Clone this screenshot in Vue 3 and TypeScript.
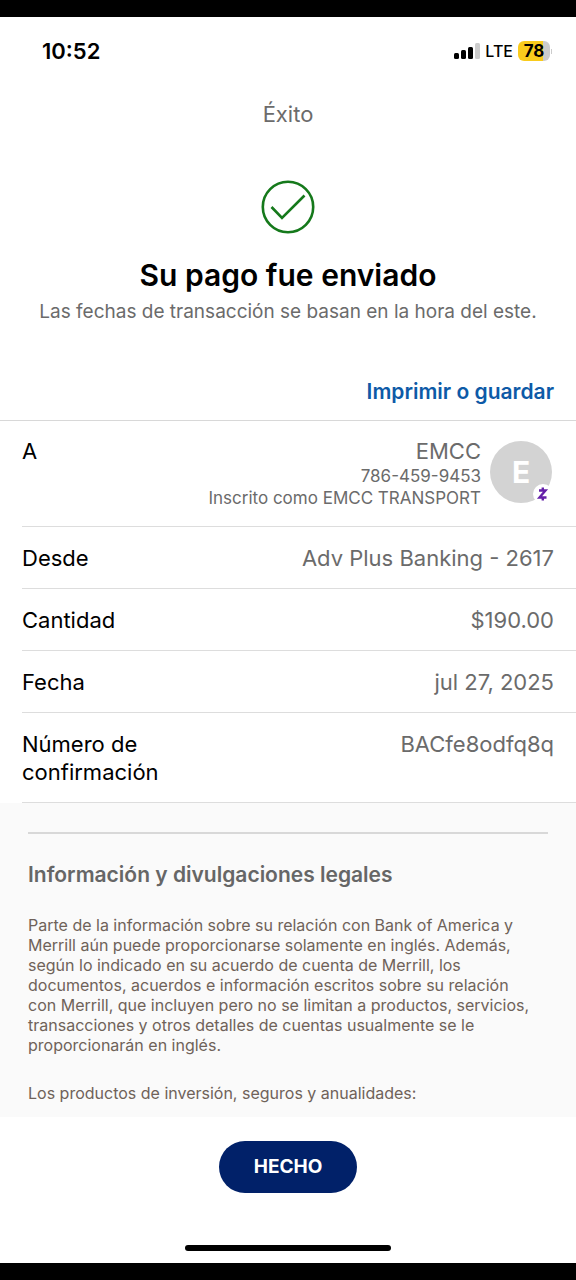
<script setup lang="ts">
interface Detail {
  label: string
  value: string
}

const details: Detail[] = [
  { label: 'Desde', value: 'Adv Plus Banking - 2617' },
  { label: 'Cantidad', value: '$190.00' },
  { label: 'Fecha', value: 'jul 27, 2025' },
  { label: 'Número de confirmación', value: 'BACfe8odfq8q' },
]
</script>

<template>
  <div class="screen">
    <header class="status">
      <span class="time">10:52</span>
      <div class="indicators">
        <svg class="signal" viewBox="0 0 26 16" aria-hidden="true">
          <rect x="0" y="10" width="5" height="6" rx="1.5" />
          <rect x="7" y="7" width="5" height="9" rx="1.5" />
          <rect x="14" y="4" width="5" height="12" rx="1.5" />
          <rect class="dim" x="21" y="0" width="5" height="16" rx="1.5" />
        </svg>
        <span class="network">LTE</span>
        <span class="power">
          <span class="battery">78</span>
          <span class="nub"></span>
        </span>
      </div>
    </header>
    <main>
      <p class="title">Éxito</p>
      <section class="hero">
        <svg class="check" viewBox="0 0 54 54" aria-hidden="true">
          <circle cx="27" cy="27" r="25.2" />
          <path d="M10.500 27 L21 38 L43.500 15.500" />
        </svg>
        <h1>Su pago fue enviado</h1>
        <p>Las fechas de transacción se basan en la hora del este.</p>
      </section>
      <div class="actions"><a href="#">Imprimir o guardar</a></div>
      <dl class="details">
        <div class="row recipient">
          <dt>A</dt>
          <dd>
            <div class="who">
              <span class="name">EMCC</span>
              <span>786-459-9453</span>
              <span>Inscrito como EMCC TRANSPORT</span>
            </div>
            <div class="avatar">
              E
              <svg class="zelle" viewBox="0 0 20 20" aria-hidden="true">
                <circle cx="10" cy="10" r="10" />
                <path d="M6 6.500 H12.500 L6.500 13.500 H13.500 M9.800 3.500 V6.500 M9.800 13.500 V16.500" />
              </svg>
            </div>
          </dd>
        </div>
        <div v-for="d in details" :key="d.label" class="row">
          <dt>{{ d.label }}</dt>
          <dd>{{ d.value }}</dd>
        </div>
      </dl>
      <section class="legal">
        <h2>Información y divulgaciones legales</h2>
        <p>
          Parte de la información sobre su relación con Bank of America y Merrill aún puede
          proporcionarse solamente en inglés. Además, según lo indicado en su acuerdo de cuenta de
          Merrill, los documentos, acuerdos e información escritos sobre su relación con Merrill,
          que incluyen pero no se limitan a productos, servicios, transacciones y otros detalles de
          cuentas usualmente se le proporcionarán en inglés.
        </p>
        <p>Los productos de inversión, seguros y anualidades:</p>
      </section>
    </main>
    <footer>
      <button type="button">HECHO</button>
      <div class="home"></div>
    </footer>
  </div>
</template>

<style>
body {
  margin: 0;
  background: #fff;
}
</style>

<style scoped>
.screen {
  border-top: 17px solid #000;
  border-bottom: 17px solid #000;
  background: #fff;
  color: #000;
  font-family: Inter, "Liberation Sans", sans-serif;
}
p, h1, h2, dl, dd { margin: 0; }
.status {
  display: flex;
  justify-content: space-between;
  align-items: center;
  height: 68px;
  padding: 0 24px 0 42px;
}
.time { font-size: 22px; font-weight: 600; }
.indicators { display: flex; align-items: center; gap: 5px; }
.signal { width: 26px; height: 16px; fill: #000; }
.signal .dim { fill: #ccc; }
.network { font-size: 16px; font-weight: 500; }
.power { display: flex; align-items: center; gap: 1px; }
.battery {
  width: 32px;
  border-radius: 6px;
  background: linear-gradient(90deg, #f9cb1c 78%, #ccc 78%);
  font-size: 17px;
  font-weight: 700;
  line-height: 20px;
  text-align: center;
}
.nub { width: 1px; height: 5px; background: #ccc; }
.title {
  padding-top: 14px;
  color: #6b6b6b;
  font-size: 22px;
  line-height: 30px;
  text-align: center;
}
.hero { padding-top: 51px; text-align: center; }
.check {
  display: block;
  width: 54px;
  height: 54px;
  margin: 0 auto;
  fill: none;
  stroke: #15791b;
  stroke-width: 2.6;
}
h1 { padding-top: 22px; font-size: 30px; font-weight: 600; line-height: 38px; }
.hero p { padding-top: 6px; color: #6b6b6b; font-size: 19px; line-height: 24px; }
.actions { padding: 54px 22px 14px; text-align: right; }
.actions a { color: #0d5aa7; font-size: 21px; font-weight: 600; line-height: 28px; text-decoration: none; }
.details { border-top: 1px solid #d8d8d8; }
.row {
  display: flex;
  justify-content: space-between;
  margin-left: 22px;
  padding: 17px 22px 16px 0;
  border-bottom: 1px solid #ddd;
  font-size: 22px;
  line-height: 28px;
}
dt { max-width: 190px; }
dd { color: #6b6b6b; text-align: right; }
.recipient { padding: 16px 24px 17px 0; }
.recipient dd { display: flex; gap: 9px; }
.who { display: flex; flex-direction: column; font-size: 17px; line-height: 22px; }
.name { font-size: 22px; line-height: 28px; }
.avatar {
  position: relative;
  width: 62px;
  height: 62px;
  margin-top: 4px;
  border-radius: 50%;
  background: #d3d3d3;
  color: #fff;
  font-size: 30px;
  font-weight: 700;
  line-height: 62px;
  text-align: center;
}
.zelle { position: absolute; right: -1px; bottom: -1px; width: 20px; height: 20px; fill: none; stroke: #6420a8; stroke-width: 2.4; }
.zelle circle { fill: #fff; stroke: none; }
.legal { padding: 29px 28px 14px; background: #fafafa; color: #6f6259; }
h2 { padding-top: 29px; border-top: 2px solid #d8d8d8; color: #666; font-size: 21px; font-weight: 600; line-height: 24px; }
.legal p { padding: 28px 10px 0 0; font-size: 16px; line-height: 20px; }
footer { display: flex; flex-direction: column; align-items: center; padding: 24px 0 12px; }
button {
  padding: 0 35px;
  border: 0;
  border-radius: 26px;
  background: #012169;
  color: #fff;
  font: 700 19px/52px Inter, "Liberation Sans", sans-serif;
}
.home { width: 206px; height: 6px; margin-top: 52px; border-radius: 3px; background: #000; }
</style>
